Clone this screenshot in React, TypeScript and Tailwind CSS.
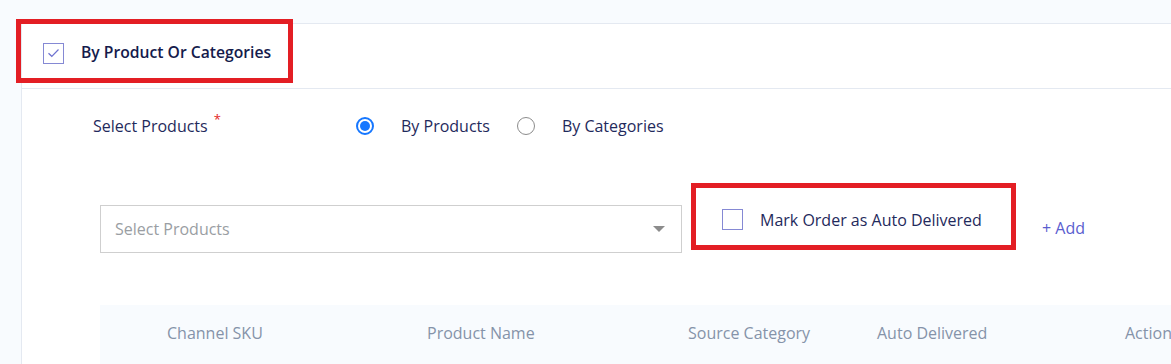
import {useState} from 'react';

const font = {fontFamily: '"Open Sans", "Noto Sans", sans-serif'};

function Radio({checked}: {checked: boolean}) {
    return checked ? (
        <span className="w-[18px] h-[18px] rounded-full border-2 border-[#1677ff] flex items-center justify-center">
            <span className="w-[10px] h-[10px] rounded-full bg-[#1677ff]" />
        </span>
    ) : (
        <span className="w-[18px] h-[18px] rounded-full border-[1.5px] border-[#8c8c8c] bg-white" />
    );
}

export default function App() {
    const [byProducts, setByProducts] = useState(true);
    const columns = ['Channel SKU', 'Product Name', 'Source Category', 'Auto Delivered', 'Action'];

    return (
        <div className="w-[1171px] h-[364px] overflow-hidden bg-[#f8fbfe]" style={font}>
            <div className="ml-[21px] mt-[23px] bg-white border-l border-t border-[#e4e9f1] h-[400px]">
                {/* header */}
                <div className="relative h-[65px] border-b border-[#e4e9f1] flex items-center pl-[21px] pb-[6px]">
                    <div className="absolute left-[-6px] top-[-5px] w-[277px] h-[64px] border-[5px] border-[#e31e24]" />
                    <span className="relative w-[21px] h-[21px] border border-[#8589d4] flex items-center justify-center bg-white">
                        <svg width="13" height="10" viewBox="0 0 13 10" fill="none">
                            <path d="M1.5 5.2 L4.8 8.3 L11.5 1.5" stroke="#6e72d0" strokeWidth="1.2" />
                        </svg>
                    </span>
                    <span className="relative ml-[17px] text-[15.7px] font-semibold text-[#151b4c]">By Product Or Categories</span>
                </div>

                {/* select type */}
                <div className="flex items-center h-[74px] pl-[71px] text-[16px] text-[#1f2a5c]">
                    <div className="w-[263px] flex items-start">
                        <span>Select Products</span>
                        <span className="ml-[6px] -mt-[4px] text-[#e31e24] text-[13px]">*</span>
                    </div>
                    <button className="flex items-center gap-[27px]" onClick={() => setByProducts(true)}>
                        <Radio checked={byProducts} />
                        <span>By Products</span>
                    </button>
                    <button className="flex items-center gap-[27px] ml-[27px]" onClick={() => setByProducts(false)}>
                        <Radio checked={!byProducts} />
                        <span>By Categories</span>
                    </button>
                </div>

                {/* product select row */}
                <div className="flex items-start pl-[78px] mt-[20px]">
                    <div className="mt-[22px] w-[582px] h-[48px] border border-[#cfcfcf] flex items-center justify-between pl-[14px] pr-[16px]">
                        <span className="text-[16px] text-[#9a9ea3]">Select Products</span>
                        <span className="w-0 h-0 border-l-[6px] border-r-[6px] border-t-[6px] border-l-transparent border-r-transparent border-t-[#8c8c8c]" />
                    </div>
                    <div className="ml-[9px] w-[325px] h-[67px] border-[5px] border-[#e31e24] flex items-center pl-[26px] pt-[6px]">
                        <span className="w-[21px] h-[21px] border border-[#8589d4] bg-white" />
                        <span className="ml-[17px] text-[16px] text-[#1f2a5c]">Mark Order as Auto Delivered</span>
                    </div>
                    <span className="ml-[26px] mt-[33px] text-[16px] text-[#5a5ecf]">+ Add</span>
                </div>

                {/* table header */}
                <div className="ml-[78px] mt-[52px] h-[60px] bg-[#f8fbfe] grid grid-cols-[260px_261px_189px_248px_auto] items-center pl-[67px] pb-[4px] text-[16px] text-[#8593a9] whitespace-nowrap">
                    {columns.map(c => (
                        <span key={c}>{c}</span>
                    ))}
                </div>
            </div>
        </div>
    );
}
